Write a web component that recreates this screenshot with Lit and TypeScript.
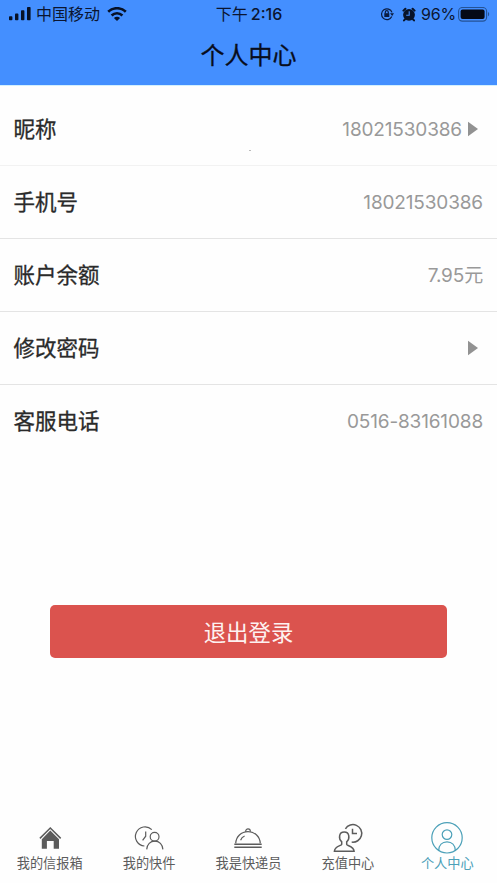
import { LitElement, html, svg, css } from "lit";
import { customElement } from "lit/decorators.js";
import { classMap } from "lit/directives/class-map.js";

const rows = [
  { label: "昵称", value: "18021530386", arrow: true },
  { label: "手机号", value: "18021530386", arrow: false },
  { label: "账户余额", value: "7.95元", arrow: false },
  { label: "修改密码", value: "", arrow: true },
  { label: "客服电话", value: "0516-83161088", arrow: false },
];

const tabs = [
  {
    label: "我的信报箱",
    active: false,
    icon: svg`
      <path d="M6.9 17.4 17.3 7l10.4 10.4" stroke-width="1.5"/>
      <path d="M17.3 9.6 26 18.2V27.8H20.7V20H13.9V27.8H8.8V18.2z" fill="currentColor" stroke="none"/>`,
  },
  {
    label: "我的快件",
    active: false,
    icon: svg`
      <path d="M19.8 8.6A9.6 9.6 0 1 0 12.4 25M13.7 10.5V15.2L10.6 19.4"/>
      <circle cx="22.6" cy="15.7" r="4.4"/>
      <path d="M14.7 28.4C15 23.4 18.3 20.1 22.8 20.1S30.6 23.4 30.9 28.4"/>`,
  },
  {
    label: "我是快递员",
    active: false,
    icon: svg`
      <path d="M4.7 22.4C5 15.6 10.2 10.6 17 10.6S29 15.6 29.3 22.4"/>
      <path d="M14.6 10.8C14.6 7 19.4 7 19.4 10.8M9.6 19.2C10.3 17.2 11.6 15.8 13.6 15"/>
      <path d="M3.3 23.2H30.7M3.3 26.2H30.7" stroke-width="1.4"/>`,
  },
  {
    label: "充值中心",
    active: false,
    icon: svg`
      <path stroke-width="1.5" d="M10.7 20.7C7.4 17.8 7.6 11 13.2 11S19 17.8 15.7 20.7V23.4C16 24.8 22.9 25.2 23.1 30.3H3.4C3.6 25.2 10.4 24.8 10.7 23.4Z"/>
      <path stroke-width="1.5" d="M14.4 7.8A8.8 8.8 0 1 1 20.7 21.1M21.5 7.8V12.6H26"/>`,
  },
  {
    label: "个人中心",
    active: true,
    icon: svg`
      <circle cx="17" cy="16.8" r="15.2"/>
      <circle cx="17" cy="13.6" r="4.8"/>
      <path d="M8.7 29.4C8.9 24.4 12 20.9 17 20.9S25.1 24.4 25.3 29.4"/>`,
  },
];

@customElement("app-root")
export class AppRoot extends LitElement {
  static styles = css`
    :host {
      display: flex;
      flex-direction: column;
      box-sizing: border-box;
      width: 100%;
      height: 100vh;
      overflow: hidden;
      background: #fefefe;
      font-family: Inter, "Noto Sans CJK SC", sans-serif;
    }
    svg { display: block; flex: none; }
    .header {
      flex: none;
      box-sizing: border-box;
      height: 86px;
      background: #448fff;
      border-bottom: 1px solid #d3f0fd;
      color: #0b1530;
    }
    .status {
      display: grid;
      grid-template-columns: 1fr auto 1fr;
      align-items: center;
      height: 28px;
      padding: 0 8px 0 9px;
      font-size: 16px;
      line-height: 28px;
    }
    .left, .right, .time { display: flex; align-items: center; }
    .left { gap: 5px; }
    .right { justify-content: flex-end; margin-right: -1px; }
    .time { gap: 3px; }
    .clock { font-weight: 500; }
    .battery-text { margin: 0 2px 0 5px; letter-spacing: -0.2px; }
    .alarm { margin-left: 8px; }
    .title {
      height: 56px;
      margin: 0;
      text-align: center;
      font-size: 24px;
      line-height: 56px;
      font-weight: 400;
      -webkit-text-stroke: 0.3px currentColor;
      color: #080d1c;
    }
    .list { flex: none; padding-top: 7px; }
    .row {
      position: relative;
      display: flex;
      align-items: center;
      justify-content: space-between;
      box-sizing: border-box;
      height: 73px;
      padding: 0 14px 0 13.5px;
      border-bottom: 1px solid #e4e4e4;
    }
    .row:first-child { border-color: #f2f2f2; }
    .row:last-child { border-color: transparent; }
    .speck {
      position: absolute;
      left: 249px;
      bottom: 14px;
      width: 2px;
      height: 1px;
      background: #bbb;
    }
    .label {
      font-size: 21.5px;
      line-height: 24px;
      color: #2a2a2a;
      -webkit-text-stroke: 0.3px currentColor;
    }
    .value {
      display: flex;
      align-items: center;
      padding-top: 2px;
      font-size: 19px;
      line-height: 24px;
      letter-spacing: -0.15px;
      color: #999;
    }
    .arrow { margin: 0 5px 2px 6px; }
    .logout {
      flex: none;
      height: 53px;
      margin: 147px 50px 0;
      padding: 0;
      border: 0;
      border-radius: 5px;
      background: #db534e;
      color: #fdf1f0;
      font: 400 22.4px/53px "Noto Sans CJK SC", sans-serif;
    }
    .tabs {
      display: grid;
      grid-template-columns: repeat(5, 1fr);
      margin-top: auto;
      height: 62px;
      flex: none;
    }
    .tab {
      display: flex;
      flex-direction: column;
      align-items: center;
      color: #5c5c5c;
      font-size: 13.2px;
      line-height: 18px;
      white-space: nowrap;
    }
    .tab.active { color: #4ba0b8; }
    .tab svg { fill: none; stroke: currentColor; stroke-width: 1.2; }
  `;

  render() {
    const arrow = html`<svg class="arrow" width="10" height="16" viewBox="0 0 10 16"><path d="M0 .7 10 8 0 15.3z" fill="#929292"/></svg>`;
    return html`
      <header class="header">
        <div class="status">
          <div class="left">
            <svg width="22" height="14" viewBox="0 0 22 14" fill="#071126">
              <rect x="0" y="9.3" width="3.4" height="4" rx=".8"/>
              <rect x="6" y="6.6" width="3.4" height="6.7" rx=".8"/>
              <rect x="12" y="3.3" width="3.4" height="10" rx=".8"/>
              <rect x="18" y="0" width="3.6" height="13.3" rx=".8"/>
            </svg>
            <span>中国移动</span>
            <svg width="22" height="15" viewBox="-2 0.4 22 15" fill="none" stroke="#071126" stroke-width="2.6">
              <path d="M1.2 5.2C6.2.4 13.8.4 18.8 5.2M4.6 8.9C7.7 5.9 12.3 5.9 15.4 8.9"/>
              <path d="M10 14.5 6.9 11.3C8.7 9.7 11.3 9.7 13.1 11.3Z" fill="#071126" stroke="none"/>
            </svg>
          </div>
          <div class="time"><span>下午</span><span class="clock">2:16</span></div>
          <div class="right">
            <svg width="14" height="14" viewBox="0 0 14 14" fill="none" stroke="#0b1c40" stroke-width="1.2">
              <path d="M11.8 9.6A5.4 5.4 0 1 1 12 5.4"/>
              <path d="M10 6.2H14L12.2 9z" fill="#0b1c40" stroke="none"/>
              <rect x="4.3" y="6.2" width="5" height="3.8" fill="#0b1c40" stroke="none"/>
              <path d="M5.3 6.4V5.2C5.3 3.2 8.3 3.2 8.3 5.2V6.4"/>
            </svg>
            <svg class="alarm" width="14" height="15" viewBox="0 0 14 15">
              <circle cx="7" cy="7.8" r="5.9" fill="#081329"/>
              <path d="M1.4 3.6 3.4 1.7M12.6 3.6 10.6 1.7M3 12.3 2 13.4M11 12.3 12 13.4" stroke="#081329" stroke-width="2" stroke-linecap="round"/>
              <path d="M7.2 4.2V8.2H4.2" fill="none" stroke="#448fff" stroke-width="1.1"/>
            </svg>
            <span class="battery-text">96%</span>
            <svg width="32" height="15" viewBox="0 0 32 15">
              <rect x=".6" y=".5" width="28" height="13.6" rx="3.8" fill="none" stroke="#245396" stroke-width="1.1"/>
              <rect x="2.6" y="2.5" width="24" height="9.6" rx="2" fill="#050a16"/>
              <path d="M30 5.1C31.6 5.7 31.6 8.7 30 9.3z" fill="#245396"/>
            </svg>
          </div>
        </div>
        <h1 class="title">个人中心</h1>
      </header>
      <main class="list">
        ${rows.map(
          (r, i) => html`<div class="row">
            <span class="label">${r.label}</span>
            <span class="value">${r.value}${r.arrow ? arrow : ""}</span>
            ${i === 0 ? html`<i class="speck"></i>` : ""}
          </div>`
        )}
      </main>
      <button class="logout">退出登录</button>
      <nav class="tabs">
        ${tabs.map(
          (t) => html`<div class=${classMap({ tab: true, active: t.active })}>
            <svg width="34" height="33" viewBox="0 0 34 33">${t.icon}</svg>
            <span>${t.label}</span>
          </div>`
        )}
      </nav>
    `;
  }
}
